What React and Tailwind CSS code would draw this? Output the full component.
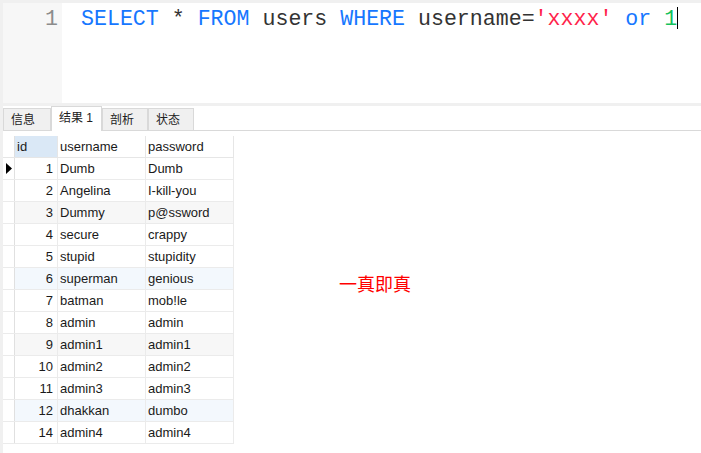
import React from "react";

const rows = [
  [1, "Dumb", "Dumb"],
  [2, "Angelina", "I-kill-you"],
  [3, "Dummy", "p@ssword"],
  [4, "secure", "crappy"],
  [5, "stupid", "stupidity"],
  [6, "superman", "genious"],
  [7, "batman", "mob!le"],
  [8, "admin", "admin"],
  [9, "admin1", "admin1"],
  [10, "admin2", "admin2"],
  [11, "admin3", "admin3"],
  [12, "dhakkan", "dumbo"],
  [14, "admin4", "admin4"],
];

const tabs = ["信息", "结果 1", "剖析", "状态"];
const tabWidths = ["w-[48px]", "w-[51px]", "w-[46px]", "w-[46px]"];

const rowBg = (i) => {
  if (i % 3 !== 2) return "bg-white";
  return i % 6 === 2 ? "bg-[#f7f7f7]" : "bg-[#f3f8fd]";
};

const App = () => {
  return (
    <div className="relative w-[701px] h-[453px] overflow-hidden bg-[#f0f0f0] pt-[3px] pl-[3px] font-['Microsoft_YaHei','Liberation_Sans','Noto_Sans_CJK_SC',sans-serif]">
      {/* editor */}
      <div className="flex h-[100px] bg-white">
        <div className="w-[59px] bg-[#f7f7f7] text-right pr-[4px] pt-[1px] text-[21.6px] leading-[30px] text-[#8c8c8c] font-['Liberation_Mono',monospace]">
          1
        </div>
        <div className="flex-1 pl-[19px] pt-[1px] text-[21.6px] leading-[30px] font-['Liberation_Mono',monospace] text-[#333] whitespace-pre">
          <span className="text-[#1677ff]">SELECT</span>
          {" * "}
          <span className="text-[#1677ff]">FROM</span>
          {" users "}
          <span className="text-[#1677ff]">WHERE</span>
          {" username="}
          <span className="text-[#ff1f4b]">'xxxx'</span>{" "}
          <span className="text-[#1677ff]">or</span>{" "}
          <span className="text-[#14c25c]">1</span>
          <span className="inline-block w-px h-[22px] bg-black align-[-4px]"></span>
        </div>
      </div>

      {/* results */}
      <div className="mt-[3px] h-[347px] bg-white">
        <div className="flex items-end h-[25px] border-b border-[#d9d9d9] text-[12px] text-[#222]">
          {tabs.map((t, i) =>
            i === 1 ? (
              <div key={t} className={`${tabWidths[i]} h-[25px] -mb-px bg-white border border-b-0 border-[#d9d9d9] pl-[7px] pt-[2px]`}>
                {t}
              </div>
            ) : (
              <div key={t} className={`${tabWidths[i]} h-[22px] bg-[#f0f0f0] border border-b-0 border-[#d9d9d9] pl-[7px] pt-[2px]`}>
                {t}
              </div>
            )
          )}
        </div>

        <div className="mt-[5px] w-[231px] text-[13px] text-[#1a1a1a]">
          <div className="flex h-[22px] border-b border-[#e6e6e6]">
            <div className="w-[12px] border-r border-[#e0e0e0]"></div>
            <div className="w-[43px] bg-[#dae8f6] border-r border-[#e6e6e6] pl-[2px] pt-px leading-[20px]">id</div>
            <div className="w-[88px] border-r border-[#e6e6e6] pl-[2px] pt-px leading-[20px]">username</div>
            <div className="w-[88px] border-r border-[#e6e6e6] pl-[2px] pt-px leading-[20px]">password</div>
          </div>
          {rows.map(([id, user, pass], i) => (
            <div key={id} className="flex h-[22px] border-b border-[#ebebeb]">
              <div className="w-[12px] border-r border-[#e0e0e0] flex items-center pl-[3px]">
                {i === 0 && (
                  <svg width="6" height="11" viewBox="0 0 6 11">
                    <path d="M0 0 L6 5.5 L0 11 Z" fill="#000" />
                  </svg>
                )}
              </div>
              <div className={`w-[43px] ${rowBg(i)} border-r border-[#ebebeb] text-right pr-[4px] pt-px leading-[20px]`}>{id}</div>
              <div className={`w-[88px] ${rowBg(i)} border-r border-[#ebebeb] pl-[2px] pt-px leading-[20px]`}>{user}</div>
              <div className={`w-[88px] ${rowBg(i)} border-r border-[#ebebeb] pl-[2px] pt-px leading-[20px]`}>{pass}</div>
            </div>
          ))}
        </div>
      </div>

      <div className="absolute left-[339px] top-[270px] text-[18px] text-[#ff0000] font-['Noto_Sans_CJK_SC',sans-serif]">
        一真即真
      </div>
    </div>
  );
};

export default App;
